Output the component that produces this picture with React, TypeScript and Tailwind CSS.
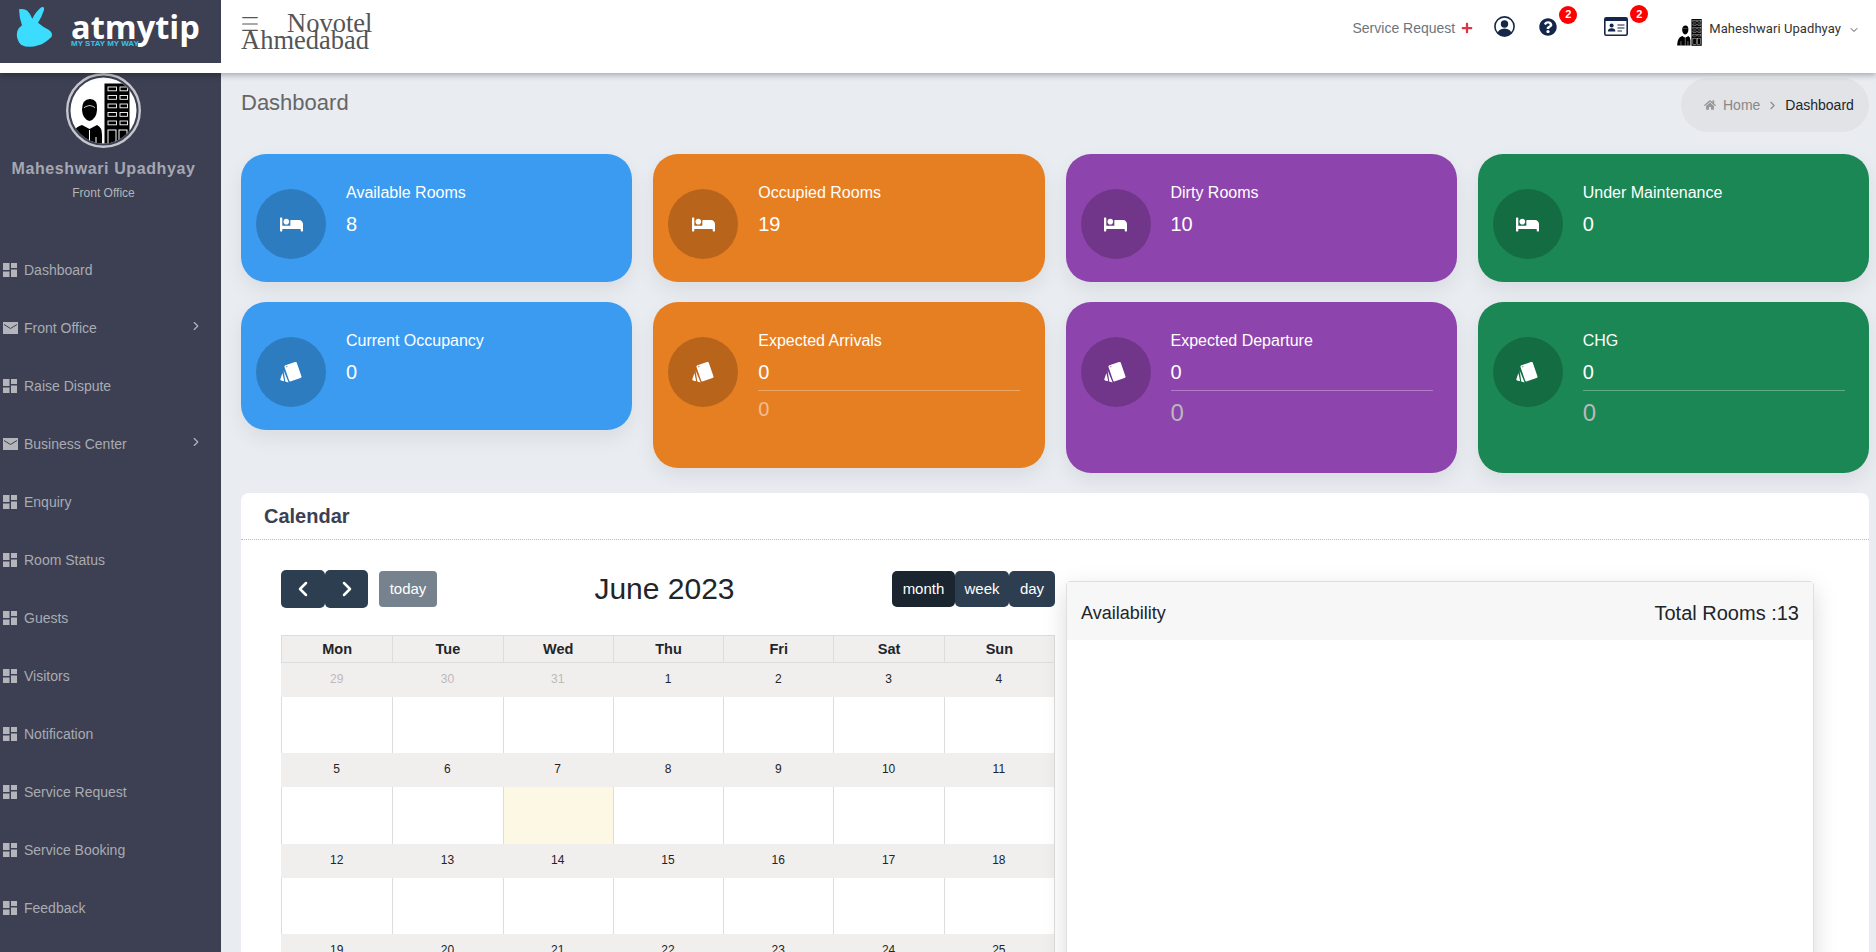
import type { ReactNode } from "react";

import { ChevronDown, ChevronLeft, ChevronRight, Menu } from "lucide-react";
import { FaBed, FaHome, FaPlus, FaQuestionCircle } from "react-icons/fa";

const menuItems = [
  { label: "Dashboard", icon: "grid" },
  { label: "Front Office", icon: "mail", arrow: true },
  { label: "Raise Dispute", icon: "grid" },
  { label: "Business Center", icon: "mail", arrow: true },
  { label: "Enquiry", icon: "grid" },
  { label: "Room Status", icon: "grid" },
  { label: "Guests", icon: "grid" },
  { label: "Visitors", icon: "grid" },
  { label: "Notification", icon: "grid" },
  { label: "Service Request", icon: "grid" },
  { label: "Service Booking", icon: "grid" },
  { label: "Feedback", icon: "grid" },
];

const weekDays = ["Mon", "Tue", "Wed", "Thu", "Fri", "Sat", "Sun"];

const weeks = [
  ["29", "30", "31", "1", "2", "3", "4"],
  ["5", "6", "7", "8", "9", "10", "11"],
  ["12", "13", "14", "15", "16", "17", "18"],
  ["19", "20", "21", "22", "23", "24", "25"],
];

function GridIcon() {
  return (
    <svg width="14" height="14" viewBox="0 0 14 14" className="fill-[#b4b5bb]">
      <rect x="0" y="0" width="6.5" height="7" />
      <rect x="0" y="8.5" width="6.5" height="5.5" />
      <rect x="8" y="0" width="6" height="5" />
      <rect x="8" y="6.5" width="6" height="7.5" />
    </svg>
  );
}

function MailIcon() {
  return (
    <svg width="15" height="12" viewBox="0 0 15 12">
      <rect width="15" height="12" fill="#b4b5bb" />
      <path d="M1 2.5 L7.5 6.5 L14 2.5" fill="none" stroke="#3c4052" strokeWidth="1" />
    </svg>
  );
}

function LogoMark() {
  return (
    <svg width="60" height="63" viewBox="0 0 180 189" className="fill-[#3cdcff]">
      <path d="M57 28 Q72 24 82 32 Q92 42 97 56 Q108 34 124 22 Q134 18 132 30 Q124 54 114 68 Q128 80 147 90 Q159 98 155 110 Q135 130 115 136 Q85 146 63 134 Q46 117 52 93 Q57 82 66 76 Q58 55 57 28 Z" />
    </svg>
  );
}

function ManAndBuilding() {
  return (
    <>
      <rect x="38.5" y="10.5" width="25" height="65" fill="#000" />
      {[14, 22.5, 31, 39.5, 48].map((y) => (
        <g key={y} fill="#000" stroke="#fff" strokeWidth="0.9">
          <rect x="42" y={y} width="8.5" height="3.8" />
          <rect x="54" y={y} width="7.5" height="3.8" />
        </g>
      ))}
      <rect x="42" y="57" width="8" height="15" fill="none" stroke="#fff" strokeWidth="1" />
      <rect x="53" y="57" width="8" height="15" fill="none" stroke="#fff" strokeWidth="1" />
      <path d="M16 37 Q16 26 24 26 Q32 26 31 37 Q30.5 46 23.5 48 Q16.5 46 16 37 Z" fill="#000" />
      <path d="M18 35 Q24 31 29 35 L29 34.2 Q24 30.2 18 34.2 Z" fill="#fff" />
      <path d="M4 72 Q5 55 16 52 L23.5 56 L31 52 Q36 54 36 62 L36 75 L4 75 Z" fill="#000" />
      <path d="M23.5 57 V75 M13 64 V75 M30 64 V75" stroke="#fff" strokeWidth="1" fill="none" />
    </>
  );
}

function ProfileAvatar() {
  return (
    <svg width="75" height="75" viewBox="0 0 75 75">
      <defs>
        <clipPath id="avatar-clip">
          <circle cx="37.5" cy="37.5" r="33" />
        </clipPath>
      </defs>
      <circle cx="37.5" cy="37.5" r="36.3" fill="none" stroke="#c6c7cc" strokeWidth="2.4" />
      <circle cx="37.5" cy="37.5" r="33" fill="#fff" />
      <g clipPath="url(#avatar-clip)">
        <ManAndBuilding />
      </g>
    </svg>
  );
}

function HeaderAvatar() {
  return (
    <svg width="26" height="28" viewBox="4 8 62 68">
      <ManAndBuilding />
    </svg>
  );
}

function UserRingIcon() {
  return (
    <svg width="21" height="21" viewBox="0 0 21 21">
      <defs>
        <clipPath id="user-ring-clip">
          <circle cx="10.5" cy="10.5" r="9.5" />
        </clipPath>
      </defs>
      <circle cx="10.5" cy="10.5" r="9.6" fill="#fff" stroke="#14274a" strokeWidth="1.6" />
      <circle cx="10.5" cy="8" r="3.7" fill="#14274a" />
      <g clipPath="url(#user-ring-clip)">
        <ellipse cx="10.5" cy="18" rx="7" ry="5.6" fill="#14274a" />
      </g>
    </svg>
  );
}

function IdCardIcon() {
  return (
    <svg width="24" height="19" viewBox="0 0 24 19">
      <rect x="0.8" y="0.8" width="22.4" height="17.4" rx="1.5" fill="#fff" stroke="#14274a" strokeWidth="1.6" />
      <rect x="1" y="1" width="22" height="3" fill="#14274a" />
      <circle cx="7.6" cy="8.6" r="2" fill="#14274a" />
      <path d="M3.8 14.5 Q4 11.3 7.6 11.3 Q11.2 11.3 11.4 14.5 Z" fill="#14274a" />
      <path d="M13.5 8 H20.5 M13.5 11 H20.5 M13.5 14 H18" stroke="#14274a" strokeWidth="1.2" fill="none" />
    </svg>
  );
}

function CardsIcon() {
  return (
    <svg width="23" height="21" viewBox="0 0 23 21" className="fill-white">
      <g transform="rotate(-19 13 9.7)">
        <rect x="6.5" y="1.2" width="13" height="17" rx="1.5" />
      </g>
      <circle cx="6.8" cy="4.6" r="0.8" fill="#000" fillOpacity="0.4" />
      <path d="M3.6 8.5 L8.6 20.4 L5.3 19.6 Z" />
      <path d="M2.4 11 L4.2 19.2 L1 18.4 Q0 18 0.4 17 Z" />
    </svg>
  );
}

function Badge() {
  return (
    <span className="absolute -top-[12px] -right-[20px] flex h-[18px] w-[18px] items-center justify-center rounded-full bg-[#ff0000] text-[11px] font-bold text-white">
      2
    </span>
  );
}

function Header() {
  return (
    <header className="relative z-10 flex h-[73px] items-start bg-white shadow-[0_2px_6px_rgba(0,0,0,0.3)]">
      <div className="flex h-[63px] w-[221px] bg-[#3c4052]">
        <LogoMark />
        <div className="mt-[5px] ml-[11px]">
          <p className="font-['Open_Sans',sans-serif] text-[32.5px] leading-[43px] font-bold text-white">
            atmytip
          </p>
          <p className="-mt-[9px] text-[8px] leading-[9px] font-bold text-[#38c6e8]">
            MY STAY MY WAY
          </p>
        </div>
      </div>

      <div className="relative mt-[15px] ml-[20px] w-[132px] font-['Liberation_Serif',serif] text-[26.5px] leading-[17px] text-[#555]">
        <Menu size={22} strokeWidth={1.2} className="absolute -top-[2px] -left-[2px]" />
        <p className="pl-[46px]">Novotel</p>
        <p>Ahmedabad</p>
      </div>

      <div className="mt-[14px] ml-auto flex items-center pr-[16px]">
        <span className="mb-[4px] text-sm text-[#6c757d]">Service Request</span>
        <FaPlus size={12} className="mb-[4px] ml-[6px] text-[#dc3545]" />
        <span className="mb-[7px] ml-[21px]">
          <UserRingIcon />
        </span>
        <span className="relative mb-[7px] ml-[24px]">
          <FaQuestionCircle size={18} className="text-[#14274a]" />
          <Badge />
        </span>
        <span className="relative mb-[7px] ml-[47px]">
          <IdCardIcon />
          <Badge />
        </span>
        <span className="mt-[4px] ml-[49px]">
          <HeaderAvatar />
        </span>
        <span className="mb-[2px] ml-[6px] font-['Roboto',sans-serif] text-[13px] tracking-[0.07px] text-[#333]">
          Maheshwari Upadhyay
        </span>
        <ChevronDown size={12} className="ml-[7px] text-[#555]" />
      </div>
    </header>
  );
}

function Sidebar() {
  return (
    <aside className="w-[221px] shrink-0 bg-[#3c4052]">
      <div className="flex flex-col items-center pr-[14px]">
        <ProfileAvatar />
        <p className="mt-[11px] text-base leading-[20px] font-bold tracking-[0.6px] text-[#a5a7b2]">
          Maheshwari Upadhyay
        </p>
        <p className="mt-[5px] text-xs leading-[18px] text-[#b5b5b5]">
          Front Office
        </p>
      </div>

      <nav className="mt-[39px]">
        {menuItems.map((item) => (
          <div
            key={item.label}
            className="flex h-[58px] items-center pl-[3px] text-sm text-[#a9abb3]"
          >
            <span className="flex w-[21px] items-center">
              {item.icon === "grid" ? <GridIcon /> : <MailIcon />}
            </span>
            {item.label}
            {item.arrow && (
              <ChevronRight
                size={14}
                className="mr-[18px] mb-[5px] ml-auto text-[#b4b5bb]"
              />
            )}
          </div>
        ))}
      </nav>
    </aside>
  );
}

interface StatCardProps {
  title: string;
  value: string;
  color: string;
  icon: ReactNode;
  second?: string;
  secondClass?: string;
  height: string;
}

function StatCard({
  title,
  value,
  color,
  icon,
  second,
  secondClass,
  height,
}: StatCardProps) {
  return (
    <div
      className={`flex rounded-[25px] pl-[15px] text-white shadow-[0_8px_20px_rgba(0,0,0,0.07)] ${color} ${height}`}
    >
      <div className="mt-[35px] flex h-[70px] w-[70px] shrink-0 items-center justify-center rounded-full bg-black/20">
        {icon}
      </div>

      <div className="ml-[20px] w-[262px] pt-[27px]">
        <p className="text-base leading-[24px]">{title}</p>
        <p className="mt-[4px] text-xl leading-[30px]">{value}</p>
        {second && (
          <p className={`mt-[3px] border-t border-white/30 ${secondClass}`}>
            {second}
          </p>
        )}
      </div>
    </div>
  );
}

function CalendarTable() {
  return (
    <div className="border-x border-t border-[#ddd]">
      <div className="grid h-[27px] grid-cols-7 border-b border-[#ddd] bg-[#f1eeee]">
        {weekDays.map((day) => (
          <div
            key={day}
            className="border-l border-[#ddd] text-center text-[14.5px] leading-[26px] font-bold text-[#212529] first:border-l-0"
          >
            {day}
          </div>
        ))}
      </div>

      {weeks.map((week, weekIndex) => (
        <div key={week[0]} className="grid h-[90.4px] grid-cols-7">
          {week.map((date, dayIndex) => (
            <div
              key={date}
              className={`flex flex-col border-l border-[#ddd] first:border-l-0 ${
                date === "7" ? "bg-[#fcf8e3]" : ""
              }`}
            >
              <div
                className={`-ml-px h-[34px] bg-[#f1eeee] text-center text-xs leading-[33px] ${
                  weekIndex === 0 && dayIndex < 3
                    ? "text-[#bbb]"
                    : "text-[#212529]"
                }`}
              >
                {date}
              </div>
            </div>
          ))}
        </div>
      ))}
    </div>
  );
}

function CalendarPanel() {
  return (
    <section className="mt-[20px] rounded-t-[8px] bg-white">
      <h2 className="h-[47px] border-b border-dotted border-[#bbb] pl-[23px] text-xl leading-[47px] font-bold text-[#3c4052]">
        Calendar
      </h2>

      <div className="flex pt-[30px] pl-[40px]">
        <div className="w-[774px] shrink-0">
          <div className="mb-[27px] flex h-[38px] items-center justify-between">
            <div className="flex items-center">
              <button
                type="button"
                className="flex h-[38px] w-[44px] items-center justify-center rounded-[5px] bg-[#2c3e50] text-white"
              >
                <ChevronLeft size={24} strokeWidth={2.5} />
              </button>
              <button
                type="button"
                className="flex h-[38px] w-[43px] items-center justify-center rounded-[5px] bg-[#2c3e50] text-white"
              >
                <ChevronRight size={24} strokeWidth={2.5} />
              </button>
              <button
                type="button"
                className="ml-[11px] h-[36px] w-[58px] rounded-[4px] bg-[#76828d] text-[15px] text-white"
              >
                today
              </button>
            </div>

            <h3 className="-mt-[2px] text-[30px] text-[#212529]">June 2023</h3>

            <div className="flex text-[15px] text-white">
              <button
                type="button"
                className="h-[36px] w-[63px] rounded-[5px] bg-[#1a252f]"
              >
                month
              </button>
              <button
                type="button"
                className="h-[36px] w-[54px] rounded-[5px] bg-[#2c3e50]"
              >
                week
              </button>
              <button
                type="button"
                className="h-[36px] w-[46px] rounded-[5px] bg-[#2c3e50]"
              >
                day
              </button>
            </div>
          </div>

          <CalendarTable />
        </div>

        <div className="mt-[11px] ml-[11px] h-[500px] w-[748px] shrink-0 rounded-[4px] border border-[#dfdfdf] bg-white shadow-[0_8px_24px_rgba(0,0,0,0.15)]">
          <div className="flex h-[58px] items-center justify-between bg-[#f7f7f7] pt-[4px] pr-[14px] pl-[14px] text-[#212529]">
            <span className="text-[18px]">Availability</span>
            <span className="text-xl">Total Rooms :13</span>
          </div>
        </div>
      </div>
    </section>
  );
}

export default function App() {
  const bed = <FaBed size={23} className="text-white" />;
  const cards = <CardsIcon />;

  return (
    <div className="h-[952px] overflow-hidden bg-[#e9ecf1] font-['Liberation_Sans',Arial,sans-serif]">
      <Header />

      <div className="flex h-[879px]">
        <Sidebar />

        <main className="min-w-0 flex-1 pr-[7px] pl-[20px]">
          <div className="flex h-[81px] items-start justify-between">
            <h1 className="mt-[16px] text-[22px] leading-[28px] text-[#666]">
              Dashboard
            </h1>

            <div className="mt-[5px] flex h-[54px] w-[188px] items-center rounded-[27px] bg-[#e2e3e7] pl-[23px] text-sm">
              <FaHome size={12} className="text-[#999]" />
              <span className="ml-[7px] text-[#888]">Home</span>
              <ChevronRight size={13} className="mx-[6px] text-[#888]" />
              <span className="text-[#212529]">Dashboard</span>
            </div>
          </div>

          <div className="grid grid-cols-4 items-start gap-x-[21px] gap-y-[20px]">
            <StatCard title="Available Rooms" value="8" color="bg-[#3a9bf1]" icon={bed} height="h-[128px]" />
            <StatCard title="Occupied Rooms" value="19" color="bg-[#e67e22]" icon={bed} height="h-[128px]" />
            <StatCard title="Dirty Rooms" value="10" color="bg-[#8e44ad]" icon={bed} height="h-[128px]" />
            <StatCard title="Under Maintenance" value="0" color="bg-[#1a8754]" icon={bed} height="h-[128px]" />
            <StatCard title="Current Occupancy" value="0" color="bg-[#3a9bf1]" icon={cards} height="h-[128px]" />
            <StatCard
              title="Expected Arrivals"
              value="0"
              color="bg-[#e67e22]"
              icon={cards}
              second="0"
              secondClass="pt-[3px] text-xl leading-[30px] text-white/50"
              height="h-[166px]"
            />
            <StatCard
              title="Expected Departure"
              value="0"
              color="bg-[#8e44ad]"
              icon={cards}
              second="0"
              secondClass="pt-[4px] text-2xl leading-[36px] text-[#b9b9b9]"
              height="h-[171px]"
            />
            <StatCard
              title="CHG"
              value="0"
              color="bg-[#1a8754]"
              icon={cards}
              second="0"
              secondClass="pt-[4px] text-2xl leading-[36px] text-[#b9b9b9]"
              height="h-[171px]"
            />
          </div>

          <CalendarPanel />
        </main>
      </div>
    </div>
  );
}
